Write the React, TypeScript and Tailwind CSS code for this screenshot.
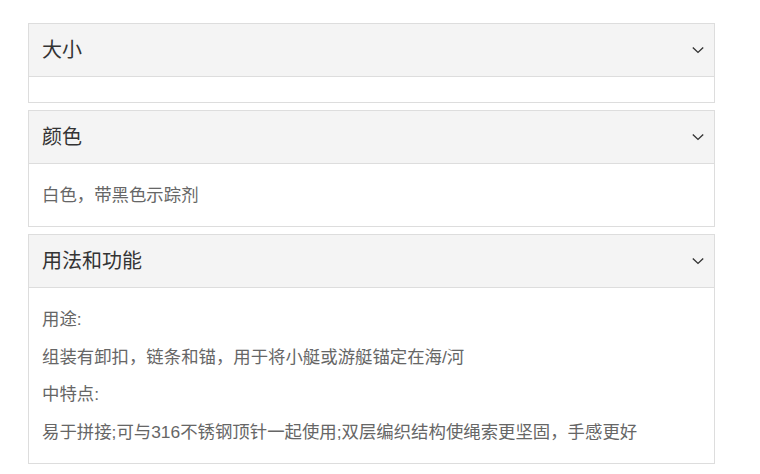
import { useState } from "react";

interface Section {
  title: string;
  lines: string[];
}

const sections: Section[] = [
  { title: "大小", lines: [] },
  { title: "颜色", lines: ["白色，带黑色示踪剂"] },
  {
    title: "用法和功能",
    lines: [
      "用途:",
      "组装有卸扣，链条和锚，用于将小艇或游艇锚定在海/河",
      "中特点:",
      "易于拼接;可与316不锈钢顶针一起使用;双层编织结构使绳索更坚固，手感更好",
    ],
  },
];

function Chevron() {
  return (
    <svg width="12" height="12" viewBox="0 0 12 12" fill="none" className="shrink-0">
      <path d="M0.8 3.6 L6 8.4 L11.2 3.6" stroke="#333" strokeWidth="1.4" />
    </svg>
  );
}

function Panel({ section }: { section: Section }) {
  const [open, setOpen] = useState(true);
  return (
    <div className="border border-[#dddddd] bg-white">
      <button
        type="button"
        onClick={() => setOpen((v) => !v)}
        className="flex h-[53px] w-full items-center justify-between border-b border-[#dddddd] bg-[#f4f4f4] pl-[13px] pr-[10px] text-left"
      >
        <span className="text-[20px] leading-none text-[#333333]">{section.title}</span>
        <Chevron />
      </button>
      {open && (
        <div className="px-[13px] pb-[7px] pt-[18px]">
          {section.lines.map((line, i) => (
            <p key={i} className="mb-[11.4px] text-[17.4px] leading-[26px] text-[#666666]">
              {line}
            </p>
          ))}
        </div>
      )}
    </div>
  );
}

export default function App() {
  return (
    <div
      className="min-h-[474px] bg-white pl-[28px] pt-[23px]"
      style={{ fontFamily: '"Liberation Sans", "Noto Sans CJK SC", sans-serif' }}
    >
      <div className="flex w-[687px] flex-col gap-[7px]">
        {sections.map((s) => (
          <Panel key={s.title} section={s} />
        ))}
      </div>
    </div>
  );
}
